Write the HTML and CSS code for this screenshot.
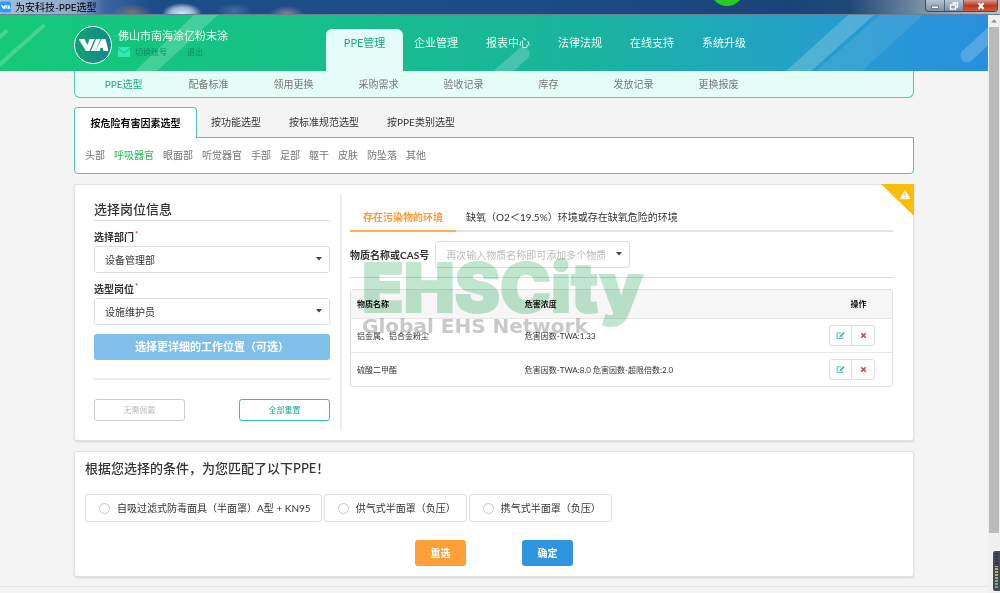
FILE: index.html
```html
<!DOCTYPE html>
<html lang="zh-CN">
<head>
<meta charset="utf-8">
<title>为安科技-PPE选型</title>
<link rel="stylesheet" href="styles.css">
</head>
<body>
<svg class="defs" aria-hidden="true">
  <symbol id="via" viewBox="0 0 30 14">
    <path d="M0 1h6l3 6 2-6h5l-5 12H7.500z"/><path d="M17.500 1h4.500l-5 12h-4.500z"/><path d="M23 1h4l3 12h-5l-.8-3h-2l-1.200 3h-4z"/>
  </symbol>
  <symbol id="caret" viewBox="0 0 6 4"><path d="M0 0h6L3 3.500z"/></symbol>
  <symbol id="edit" viewBox="0 0 12 12">
    <path d="M9 7.500v2.300H1.500V2.500H7" fill="none" stroke="currentColor" stroke-width="1.300"/>
    <path d="M4.500 8.500l.5-2.300L9.700 1.300l1.900 1.800L6.800 8z"/>
  </symbol>
  <symbol id="cross" viewBox="0 0 10 10"><path d="M1 2.500L2.500 1 5 3.300 7.500 1 9 2.500 6.700 5 9 7.500 7.500 9 5 6.700 2.500 9 1 7.500 3.300 5z"/></symbol>
</svg>

<div class="titlebar">
  <svg class="app-icon" viewBox="0 0 12 12" aria-hidden="true"><rect width="12" height="12" rx="2" fill="#2d9cf0"/><path d="M1 4h2l1 2 1-2h2L5.200 8H3.500zM7.500 4h1L7 8H6zM9 4h1l1.500 4H8z" fill="#fff"/></svg>
  <span class="title">为安科技-PPE选型</span>
  <span class="blob"></span>
  <div class="window-buttons">
    <button class="win" aria-label="最小化"><svg viewBox="0 0 10 8"><path d="M1.500 4h7v2.500h-7z" fill="#fff" stroke="#445" stroke-width=".6"/></svg></button>
    <button class="win" aria-label="还原"><svg viewBox="0 0 10 8"><path d="M3.500 1h5v4h-2M1.500 2.800h5v4.400h-5z" fill="none" stroke="#fff" stroke-width="1.300"/></svg></button>
    <button class="win close" aria-label="关闭"><svg viewBox="0 0 10 8"><path d="M2.500 1l5 6M7.500 1l-5 6" stroke="#fff" stroke-width="2"/></svg></button>
  </div>
</div>

<div class="window">
<div class="page">
  <header class="header">
    <svg class="stripes" viewBox="0 0 988 55" preserveAspectRatio="none" aria-hidden="true">
      <g stroke="#fff" stroke-linecap="round" opacity=".2">
        <path d="M-3 51L43 11" stroke-width="4"/><path d="M-3 24l9-8" stroke-width="4"/>
        <path d="M493 64l30-26" stroke-width="13"/><path d="M967 40l30-27" stroke-width="13"/>
      </g>
      <path d="M194 0h24l-61 55h-22zM848 0h26l-63 55h-25z" fill="#fff" opacity=".2"/>
      <path d="M880 0h43l-61 55h-46z" fill="#fff" opacity=".09"/>
    </svg>
    <div class="wrap header-row">
      <div class="brand">
        <span class="logo"><svg viewBox="0 0 30 14" aria-hidden="true"><use href="#via"/></svg></span>
        <div class="account">
          <div class="company">佛山市南海涂亿粉末涂</div>
          <div class="account-links">
            <svg class="mail" viewBox="0 0 12 10" aria-hidden="true"><rect width="12" height="10" rx="1" fill="#2feab0"/><path d="M0 1.500l6 4.500 6-4.500" fill="none" stroke="#16b98c"/></svg>
            <a href="#">切换账号</a><a href="#">退出</a>
          </div>
        </div>
      </div>
      <nav class="nav">
        <a class="active" href="#">PPE管理</a><a href="#">企业管理</a><a href="#">报表中心</a><a href="#">法律法规</a><a href="#">在线支持</a><a href="#">系统升级</a>
      </nav>
    </div>
  </header>

  <nav class="wrap subnav">
    <a class="active" href="#">PPE选型</a><a href="#">配备标准</a><a href="#">领用更换</a><a href="#">采购需求</a><a href="#">验收记录</a><a href="#">库存</a><a href="#">发放记录</a><a href="#">更换报废</a>
  </nav>

  <main class="wrap main">
    <section class="modes">
      <div class="mode-tabs">
        <a class="active" href="#">按危险有害因素选型</a><a href="#">按功能选型</a><a href="#">按标准规范选型</a><a href="#">按PPE类别选型</a>
      </div>
      <div class="filters">
        <a href="#">头部</a><a class="active" href="#">呼吸器官</a><a href="#">眼面部</a><a href="#">听觉器官</a><a href="#">手部</a><a href="#">足部</a><a href="#">躯干</a><a href="#">皮肤</a><a href="#">防坠落</a><a href="#">其他</a>
      </div>
    </section>

    <section class="card selector">
      <svg class="warning" viewBox="0 0 33 32" aria-hidden="true"><path d="M0 0h33v32z" fill="#fcbc09"/><path d="M24 6.500l4.700 8.200h-9.400z" fill="#fff" stroke="#fff" stroke-linejoin="round"/><path d="M24 9v3M24 13v1.300" stroke="#fcbc09" stroke-width="1.200"/></svg>
      <form class="post">
        <h2 class="section-title">选择岗位信息</h2>
        <div class="field">
          <label for="dept">选择部门<sup>*</sup></label>
          <div class="select"><select id="dept"><option>设备管理部</option></select><svg class="caret"><use href="#caret"/></svg></div>
        </div>
        <div class="field">
          <label for="post">选型岗位<sup>*</sup></label>
          <div class="select"><select id="post"><option>设施维护员</option></select><svg class="caret"><use href="#caret"/></svg></div>
        </div>
        <button class="detail" type="button">选择更详细的工作位置（可选）</button>
        <div class="post-actions">
          <button class="outline" type="button">无需佩戴</button>
          <button class="outline teal" type="button">全部重置</button>
        </div>
      </form>

      <div class="hazards">
        <div class="env-tabs">
          <a class="active" href="#">存在污染物的环境</a><a href="#">缺氧（O2＜19.5%）环境或存在缺氧危险的环境</a>
        </div>
        <div class="search">
          <label for="cas">物质名称或CAS号</label>
          <div class="select"><select id="cas" class="placeholder"><option>再次输入物质名称即可添加多个物质</option></select><svg class="caret"><use href="#caret"/></svg></div>
        </div>
        <table class="substances">
          <thead><tr><th class="name">物质名称</th><th>危害浓度</th><th class="ops">操作</th></tr></thead>
          <tbody>
            <tr><td>铝金属、铝合金粉尘</td><td>危害因数-TWA:1.33</td><td class="ops"><div class="group"><button aria-label="编辑"><svg class="edit"><use href="#edit"/></svg></button><button aria-label="删除"><svg class="cross"><use href="#cross"/></svg></button></div></td></tr>
            <tr><td>硫酸二甲酯</td><td>危害因数-TWA:8.0 危害因数-超限倍数:2.0</td><td class="ops"><div class="group"><button aria-label="编辑"><svg class="edit"><use href="#edit"/></svg></button><button aria-label="删除"><svg class="cross"><use href="#cross"/></svg></button></div></td></tr>
          </tbody>
        </table>
        <div class="watermark"><div class="wm-name">EHSCity</div><div class="wm-sub">Global EHS Network</div></div>
      </div>
    </section>

    <section class="card result">
      <h2>根据您选择的条件，为您匹配了以下PPE！</h2>
      <div class="options">
        <label class="option"><input type="radio" name="ppe">自吸过滤式防毒面具（半面罩）A型 + KN95</label>
        <label class="option"><input type="radio" name="ppe">供气式半面罩（负压）</label>
        <label class="option"><input type="radio" name="ppe">携气式半面罩（负压）</label>
      </div>
      <div class="result-actions">
        <button class="solid orange">重选</button>
        <button class="solid blue">确定</button>
      </div>
    </section>
  </main>
  <div class="page-end"></div>
</div>
<div class="scrollbar">
  <svg class="up" viewBox="0 0 12 12" aria-hidden="true"><path d="M3 7.500h6L6 4.500z" fill="#888"/></svg>
  <div class="thumb"></div>
  <div class="meter"></div>
</div>
</div>
</body>
</html>
```

FILE: styles.css
```css
* { box-sizing: border-box; }
body {
  margin: 0;
  min-height: 100vh;
  display: flex;
  flex-direction: column;
  background: #f4f4f4;
  color: #333;
  font: 10px/14px Lato, "Noto Sans CJK SC", sans-serif;
}
a { color: inherit; text-decoration: none; }
button, select { font: inherit; color: inherit; cursor: pointer; }
button { padding: 0; }
h2 { margin: 0; font-weight: 500; font-size: 13px; line-height: 18px; }
svg { display: block; fill: currentColor; }
.defs { position: absolute; width: 0; height: 0; }

/* Window frame */
.titlebar {
  position: relative;
  display: flex;
  align-items: center;
  height: 15px;
  overflow: hidden;
  border-bottom: 1px solid #6a7f96;
  background:
    radial-gradient(ellipse 20px 9px at 132px 13px, #b0805eaa, transparent),
    radial-gradient(ellipse 20px 11px at 182px 14px, #dce8f8, #dce8f8aa 60%, transparent),
    radial-gradient(ellipse 18px 8px at 234px 11px, #6283ad99, transparent),
    radial-gradient(ellipse 18px 8px at 287px 14px, #b98a95cc, transparent),
    linear-gradient(90deg, #a9bdd6 0, #8fa9cb 75px, #3c65a0 105px, #1c4d89 150px, #1b4c86 500px, #1a4479 790px, #1f4975 850px, #8296ab 930px, #b4c2d0 100%);
}
.app-icon { width: 11px; height: 12px; }
.title { margin-left: 4px; color: #000; line-height: 14px; }
.blob {
  position: absolute;
  left: 71%;
  top: -28px;
  width: 34px;
  height: 34px;
  border-radius: 50%;
  background: #27cc22;
}
.window-buttons {
  display: flex;
  align-self: stretch;
  margin: 0 2px 2px auto;
  border: 1px solid #3c4e63;
  border-top: 0;
  border-radius: 0 0 4px 4px;
  overflow: hidden;
}
.win {
  display: grid;
  place-items: center;
  width: 19px;
  border: 0;
  border-right: 1px solid #56687c;
  background: linear-gradient(#b9c5d2, #7c8da2);
}
.win svg { width: 10px; height: 8px; }
.win.close { width: 33px; border-right: 0; background: linear-gradient(#d59a8f, #bb3a20 50%, #d0573a); }
.window { flex: 1; display: flex; }
.page { flex: 1; min-width: 0; }
.wrap { width: 85%; margin: 0 auto; }

/* Header */
.header {
  position: relative;
  height: 56px;
  background: linear-gradient(90deg, #14c977 0, #16c088 30%, #1ab39e 60%, #1eacb4 70%, #2799d3 88%, #2790df 100%);
  color: #e9fff7;
  font-size: 11px;
}
.stripes { position: absolute; inset: 0; width: 100%; height: 100%; }
.header-row { position: relative; display: flex; height: 100%; }
.brand { display: flex; flex: 0 0 254px; padding-top: 11px; gap: 6px; }
.logo {
  display: grid;
  place-items: center;
  width: 38px;
  height: 38px;
  border: 1px solid #fff;
  border-radius: 50%;
  background: linear-gradient(90deg, #14a071, #118a8c);
  color: #fff;
}
.logo svg { width: 31px; height: 14px; }
.company { line-height: 20px; }
.account-links { display: flex; align-items: center; font-size: 8px; line-height: 12px; color: #0c8a68; }
.mail { width: 12px; height: 10px; margin: 0 5px 0 0; }
.account-links a + a { margin-left: 20px; }
.nav { display: flex; align-items: flex-end; }
.nav a { width: 72px; height: 42px; padding-top: 7px; text-align: center; }
.nav .active {
  width: 77px;
  margin: 0 -3px 0 -2px;
  border-radius: 6px 6px 0 0;
  background: #e4fef7;
  color: #1dab80;
}
.subnav {
  display: flex;
  height: 27px;
  padding: 0 6px;
  border: 1px solid #52c7b2;
  border-top: 0;
  border-radius: 0 0 6px 6px;
  background: #e4fef7;
  color: #777;
  line-height: 26px;
}
.subnav a { flex: 0 0 85px; text-align: center; }
.subnav .active { color: #1dab80; }

/* Mode tabs */
.main { display: flex; flex-direction: column; gap: 10px; padding-top: 9px; }
.mode-tabs { display: flex; height: 31px; line-height: 31px; position: relative; margin-bottom: -1px; }
.mode-tabs a { padding: 0 14px; }
.mode-tabs .active {
  min-width: 123px;
  border: 1px solid #52c4bd;
  border-bottom: 0;
  border-radius: 4px 4px 0 0;
  background: #fff;
  color: #111;
  font-weight: 700;
  line-height: 30px;
  text-align: center;
}
.filters {
  display: flex;
  gap: 9px;
  padding: 0 10px;
  border: 1px solid #52c4bd;
  border-radius: 0 0 4px 4px;
  background: #fff;
  color: #777;
  line-height: 35px;
}
.filters .active { color: #31bd5b; }

/* Cards */
.card {
  position: relative;
  border: 1px solid #e2e2e2;
  border-radius: 3px;
  background: #fff;
  box-shadow: 0 1px 2px #0002;
}
.selector { display: flex; padding: 10px 20px 9px 19px; }
.warning { position: absolute; top: -1px; right: -1px; width: 33px; height: 32px; }
.post { flex: 0 0 248px; padding-right: 10px; border-right: 2px solid #ececec; }
.section-title { padding: 5px 0 2px; border-bottom: 1px solid #ddd; }
.field label { display: block; padding: 8px 0 1px; line-height: 16px; font-weight: 700; }
.field sup { color: #e0452f; line-height: 0; font-size: 8px; margin-left: 1px; }
.select { position: relative; }
.select select {
  display: block;
  width: 100%;
  height: 27px;
  padding: 0 24px 0 10px;
  border: 1px solid #ddd;
  border-radius: 3px;
  background: #fff;
  appearance: none;
}
.select .placeholder { color: #bbb; }
.caret { position: absolute; right: 8px; top: 11px; width: 6px; height: 4px; color: #444; pointer-events: none; }
.detail {
  width: 100%;
  height: 26px;
  margin-top: 9px;
  border: 0;
  border-radius: 3px;
  background: #81bfeb;
  color: #fff;
  font-size: 11px;
  font-weight: 700;
}
.post-actions {
  display: flex;
  justify-content: space-between;
  margin-top: 18px;
  padding: 19px 0 10px;
  border-top: 2px solid #eee;
}
.outline {
  width: 91px;
  height: 22px;
  border: 1px solid #ccc;
  border-radius: 3px;
  background: #fff;
  color: #bbb;
  font-size: 8px;
}
.outline.teal { border-color: #35bfae; color: #14ad9a; }

/* Hazards */
.hazards { position: relative; flex: 1; min-width: 0; margin-left: 8px; }
.env-tabs { display: flex; height: 37px; border-bottom: 2px solid #e2e2e2; line-height: 20px; }
.env-tabs a { height: 37px; padding: 12px 10px 0; }
.env-tabs .active { min-width: 106px; border-bottom: 2px solid #ffb15a; color: #ff9a37; font-weight: 700; text-align: center; }
.search {
  display: flex;
  align-items: center;
  gap: 6px;
  padding: 9px 0;
  border-bottom: 1px solid #ddd;
}
.search label { font-weight: 700; white-space: nowrap; }
.search .select { flex: 0 0 195px; }
.substances {
  width: 100%;
  margin-top: 11px;
  border: 1px solid #e0e0e0;
  border-radius: 3px;
  border-spacing: 0;
  font-size: 8px;
  line-height: 12px;
}
.substances th { height: 28px; padding: 0 6px; background: #f6f6f6; color: #111; text-align: left; font-weight: 700; }
.substances td { height: 34px; padding: 0 6px; border-top: 1px solid #e8e8e8; }
.substances .name { width: 31%; }
.substances td.ops { width: 69px; padding: 0 17px 0 6px; text-align: center; }
.substances th.ops { padding: 0 10px 0 12px; text-align: center; }
.group {
  display: inline-flex;
  height: 21px;
  width: 46px;
  border: 1px solid #ddd;
  border-radius: 3px;
  vertical-align: middle;
}
.group button { flex: 1; display: grid; place-items: center; border: 0; background: none; color: #3fc1b2; }
.group button + button { border-left: 1px solid #ddd; color: #e04545; }
.edit { width: 9px; height: 9px; }
.cross { width: 7px; height: 7px; }
.watermark {
  position: absolute;
  left: 12px;
  top: 51px;
  mix-blend-mode: multiply;
  pointer-events: none;
  white-space: nowrap;
}
.wm-name { font: 900 68px/82px Inter, sans-serif; color: #c0e6d0; -webkit-text-stroke: 2px #c0e6d0; }
.wm-sub { margin-top: -12px; font: 700 20px/20px "DejaVu Sans", sans-serif; color: #cac8c8; }

/* Results */
.result { padding: 7px 10px 10px; }
.options { display: flex; gap: 2px; padding-top: 17px; }
.option {
  display: flex;
  align-items: center;
  height: 28px;
  padding: 0 10px 0 13px;
  border: 1px solid #e0e0e0;
  border-radius: 3px;
}
.option input { appearance: none; width: 11px; height: 11px; margin: 0 7px 0 0; border: 1px solid #ccc; border-radius: 50%; }
.result-actions { display: flex; justify-content: center; gap: 56px; padding-top: 18px; }
.solid { width: 51px; height: 26px; border: 0; border-radius: 3px; color: #fff; font-weight: 700; }
.orange { background: #ff9f38; }
.blue { background: #2f95df; }
.page-end { margin-top: 9px; border-top: 1px solid #e6e6e6; }

/* Scrollbar */
.scrollbar { display: flex; flex-direction: column; align-items: center; width: 12px; background: #f0f0f0; }
.up { width: 12px; height: 12px; }
.thumb { flex: 1; width: 10px; background: #bababa; }
.meter {
  align-self: flex-end;
  width: 7px;
  height: 40px;
  margin: 18px 0 2px;
  border: 2px solid #444858;
  border-radius: 2px 0 0 2px;
  background:
    repeating-linear-gradient(#0000 0 2px, #444858 2px 3px),
    linear-gradient(#30384a 35%, #c4b64e 36%, #a8bd5d 65%, #35b58d);
}
```
